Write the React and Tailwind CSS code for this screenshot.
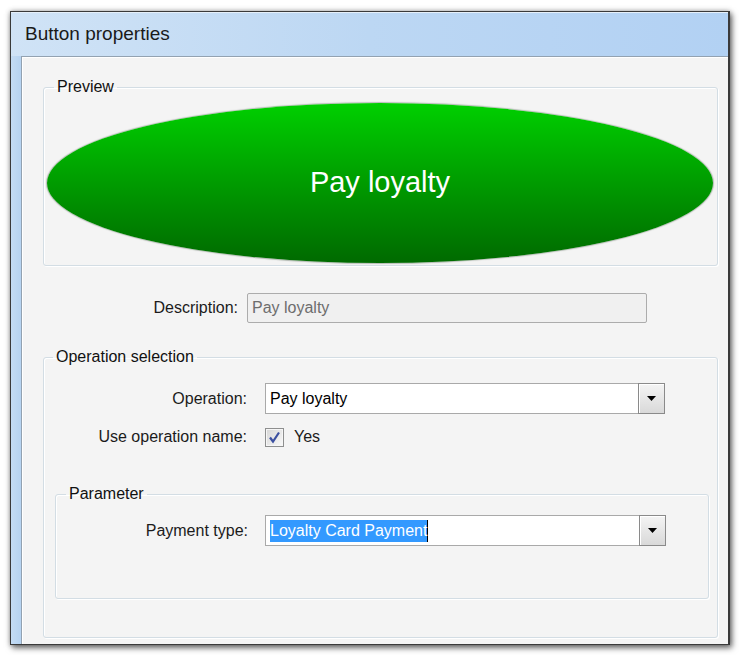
import React from "react";

function DropArrow() {
  return (
    <div className="-my-px -mr-px w-[27px] border border-[#8a8a8a] bg-gradient-to-b from-[#f4f4f4] to-[#d9d9d9] flex items-center justify-center shadow-[inset_1px_1px_0_#fff]">
      <svg width="9" height="5" viewBox="0 0 9 5">
        <polygon points="0,0 9,0 4.5,5" fill="#000" />
      </svg>
    </div>
  );
}

function Select({ width, children }) {
  return (
    <div
      className={`${width} h-[31px] flex border border-[#a9a9a9] bg-white`}
    >
      <div className="flex-1 flex items-center pl-[4px] text-black">
        {children}
      </div>
      <DropArrow />
    </div>
  );
}

function GroupBox({ legend, legendMl, className, children }) {
  return (
    <fieldset
      className={`border border-[#d3dde4] rounded-[3px] shadow-[inset_1px_1px_0_#fff,1px_1px_0_#fff] ${className}`}
    >
      <legend className={`${legendMl} px-[3px] leading-[18px] text-[#111]`}>
        {legend}
      </legend>
      {children}
    </fieldset>
  );
}

export default function App() {
  return (
    <div className="w-[739px] h-[655px] bg-white pl-[10px] pt-[11px] font-['Liberation_Sans',Arial,sans-serif] text-[16px] text-[#1b1b1b]">
      <div className="w-[720px] h-[634px] border border-[#3a3a3a] border-r-2 flex flex-col shadow-[2px_3px_6px_rgba(0,0,0,0.55),0_0_5px_rgba(0,0,0,0.3)]">
        {/* TITLE BAR */}
        <div className="h-[44px] shrink-0 flex items-center pl-[14px] bg-gradient-to-r from-[#d0e3f6] via-[#bcd7f3] to-[#b2d1f3] shadow-[inset_0_1px_0_#e6f0fa]">
          <span className="text-[19px] text-[#1a1a1a]">Button properties</span>
        </div>

        {/* BODY */}
        <div className="flex flex-1 min-h-0">
          <div className="w-[10px] bg-gradient-to-r from-[#c4dcf4] to-[#b6d3f1]" />
          <div className="flex-1 border-l border-t border-[#93a2b1] bg-[#f4f4f4] shadow-[inset_1px_1px_0_#fff] flex flex-col">
            {/* PREVIEW */}
            <GroupBox
              legend="Preview"
              legendMl="ml-[10px]"
              className="mt-[21px] ml-[21px] w-[675px] h-[188px]"
            >
              <div className="ml-[3px] mt-[7px] w-[666px] h-[160px] rounded-[50%] bg-gradient-to-b from-[#00d000] to-[#006a00] shadow-[0_0_1px_1px_rgba(60,80,60,0.35)] flex items-center justify-center">
                <span className="text-white text-[29px]">Pay loyalty</span>
              </div>
            </GroupBox>

            {/* DESCRIPTION */}
            <div className="mt-[27px] flex items-center">
              <div className="w-[216px] text-right">Description:</div>
              <div className="ml-[9px] w-[400px] h-[30px] border border-[#acacac] rounded-[2px] bg-[#f0f0f0] flex items-center pl-[4px] text-[#6d6d6d]">
                Pay loyalty
              </div>
            </div>

            {/* OPERATION SELECTION */}
            <GroupBox
              legend="Operation selection"
              legendMl="ml-[9px]"
              className="mt-[25px] ml-[21px] w-[675px] h-[290px]"
            >
              <div className="mt-[17px] flex items-center">
                <div className="w-[203px] text-right">Operation:</div>
                <div className="ml-[18px]">
                  <Select width="w-[400px]">Pay loyalty</Select>
                </div>
              </div>

              <div className="mt-[14px] flex items-center h-[18px]">
                <div className="w-[203px] text-right">Use operation name:</div>
                <div className="ml-[18px] w-[19px] h-[19px] border border-[#8e8f8f] bg-gradient-to-br from-[#d6d6d6] to-[#f9f9f9] shadow-[inset_0_0_0_1px_#f6f6f6] flex items-center justify-center">
                  <svg width="13" height="13" viewBox="0 0 13 13">
                    <path
                      d="M2 6.5 L5 10.5 L11 1.5"
                      fill="none"
                      stroke="#3b4fa0"
                      strokeWidth="2.2"
                    />
                  </svg>
                </div>
                <span className="ml-[10px]">Yes</span>
              </div>

              {/* PARAMETER */}
              <GroupBox
                legend="Parameter"
                legendMl="ml-[10px]"
                className="mt-[39px] ml-[11px] w-[654px] h-[114px]"
              >
                <div className="mt-[12px] flex items-center">
                  <div className="w-[192px] text-right">Payment type:</div>
                  <div className="ml-[17px]">
                    <Select width="w-[401px]">
                      <span className="bg-[#3399ff] text-white leading-[22px] border-r border-black">
                        Loyalty Card Payment
                      </span>
                    </Select>
                  </div>
                </div>
              </GroupBox>
            </GroupBox>
          </div>
        </div>
      </div>
    </div>
  );
}
